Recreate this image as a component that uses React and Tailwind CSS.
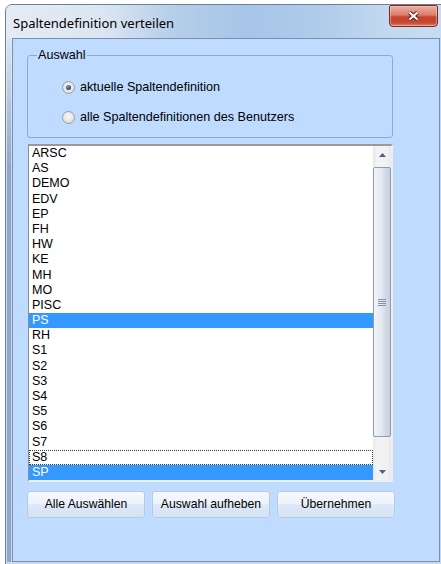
import { useState } from "react";

const codes = [
  "ARSC", "AS", "DEMO", "EDV", "EP", "FH", "HW", "KE", "MH", "MO", "PISC",
  "PS", "RH", "S1", "S2", "S3", "S4", "S5", "S6", "S7", "S8", "SP",
];

function Radio({ checked, label, onSelect }) {
  return (
    <label className="flex h-[15px] cursor-default items-center gap-[5px]" onClick={onSelect}>
      <span className="flex h-[13px] w-[13px] items-center justify-center rounded-full border border-[#9c9c9c] bg-[radial-gradient(circle_at_50%_40%,#fbfbfb_0%,#e6e6e6_55%,#cfcfcf_100%)]">
        {checked && (
          <span className="h-[5px] w-[5px] rounded-full bg-[radial-gradient(circle_at_40%_35%,#7fa2c8_0%,#2b4f78_60%,#15304f_100%)]" />
        )}
      </span>
      <span className="text-[12.6px] leading-[15px] text-black">{label}</span>
    </label>
  );
}

function ListRow({ code, selected, focused }) {
  let tone = "text-black";
  if (selected) tone = "bg-[#3399ff] text-white";
  return (
    <div
      className={
        "h-[15.2px] pl-[3px] text-[12.5px] leading-[15.2px] " +
        tone +
        (focused ? " outline-1 -outline-offset-1 outline-dotted outline-[#3a3a3a]" : "")
      }
    >
      {code}
    </div>
  );
}

function ScrollArrow({ up }) {
  return (
    <div className="flex h-[17px] items-center justify-center">
      <svg width="7" height="4" viewBox="0 0 7 4">
        <path d={up ? "M0 4 L3.5 0 L7 4 Z" : "M0 0 L7 0 L3.5 4 Z"} fill="#4d6185" />
      </svg>
    </div>
  );
}

function Button({ children }) {
  return (
    <button className="h-[27px] w-[118px] rounded-[3px] border border-[#b4c9e6] bg-[linear-gradient(to_bottom,#f6f9fd_0%,#edf3fb_46%,#dde8f7_52%,#d5e3f6_100%)] text-[12.2px] text-black shadow-[0_0_1px_#eef5ff]">
      {children}
    </button>
  );
}

export default function App() {
  const [mode, setMode] = useState("current");
  const selected = ["PS", "SP"];

  return (
    <div className="h-[564px] w-[441px] overflow-hidden bg-white font-['Liberation_Sans',Arial,sans-serif]">
      <div className="ml-[5px] mt-[4px] flex h-[600px] w-[443px] flex-col rounded-t-[7px] border border-[#6e8098] bg-[#c6d9ef]">
        {/* title bar */}
        <div className="flex h-[33px] items-start rounded-t-[6px] bg-[linear-gradient(to_right,#e4ebf4_0%,#dbe6f2_22%,#b5cee9_38%,#a7c5e7_55%,#aecbea_70%,#c2d8f0_86%,#c9dcf1_100%)]">
          <span className="ml-[7px] mt-[9px] font-['Noto_Sans',sans-serif] text-[13px] leading-[18px] text-black">
            Spaltendefinition verteilen
          </span>
          <button className="ml-auto mr-[9px] flex h-[22px] w-[49px] items-center justify-center rounded-b-[4px] rounded-t-[2px] border border-[#7b2c22] bg-[linear-gradient(to_bottom,#eab0a2_0%,#dc7d68_45%,#c7412d_55%,#c64a35_85%,#dd8a6c_100%)] shadow-[inset_0_0_0_1px_rgba(255,215,200,0.45)]">
            <svg width="13" height="10" viewBox="0 0 13 10">
              <path d="M2.5 1.5 L10.5 8.5 M10.5 1.5 L2.5 8.5" stroke="#4b1a14" strokeWidth="4" />
              <path d="M2.5 1.5 L10.5 8.5 M10.5 1.5 L2.5 8.5" stroke="#ffffff" strokeWidth="2.2" />
            </svg>
          </button>
        </div>

        <div className="flex">
          <div className="w-[6px] bg-[linear-gradient(to_bottom,rgba(228,237,248,0.9)_0px,rgba(228,237,248,0)_130px),linear-gradient(to_right,#cddef2_0px,#cddef2_1px,#8fa7c6_1px,#8fa7c6_5px,#c5d8ef_5px)]" />

          {/* client area */}
          <div className="h-[524px] w-[428px] border border-[#7a8fa9] bg-[#bfdbff] pl-[14px] pt-[9px]">
            <fieldset className="w-[366px] rounded-[3px] border border-[#8fa9ca]">
              <legend className="ml-[9px] px-[1px] text-[12.6px] leading-[15px] text-black">Auswahl</legend>
              <div className="flex flex-col gap-[15px] pb-[12px] pl-[34px] pt-[17px]">
                <Radio
                  checked={mode === "current"}
                  label="aktuelle Spaltendefinition"
                  onSelect={() => setMode("current")}
                />
                <Radio
                  checked={mode === "all"}
                  label="alle Spaltendefinitionen des Benutzers"
                  onSelect={() => setMode("all")}
                />
              </div>
            </fieldset>

            <div className="ml-[1px] mt-[6px] flex h-[338px] w-[365px] border-b-2 border-l border-r-2 border-t-2 border-b-[#eeeeee] border-l-[#8c8c8c] border-r-[#eeeeee] border-t-[#9a9a9a] bg-white">
              <div className="flex-1 overflow-hidden">
                {codes.map((code) => (
                  <ListRow
                    key={code}
                    code={code}
                    selected={selected.includes(code)}
                    focused={code === "S8"}
                  />
                ))}
              </div>
              <div className="flex w-[18px] flex-col bg-[linear-gradient(to_right,#e6e6e6_0%,#f3f3f3_20%,#f1f1f1_80%,#e8e8e8_100%)]">
                <ScrollArrow up />
                <div className="mt-[4px] flex h-[270px] items-center justify-center rounded-[2px] border border-[#8e9cb3] bg-[linear-gradient(to_right,#f2f4f8_0%,#e4e9f0_45%,#d3dbe7_70%,#c6d0de_100%)]">
                  <div className="flex flex-col gap-[1px]">
                    <div className="h-px w-[8px] bg-[#8593a8]" />
                    <div className="h-px w-[8px] bg-[#8593a8]" />
                    <div className="h-px w-[8px] bg-[#8593a8]" />
                    <div className="h-px w-[8px] bg-[#8593a8]" />
                  </div>
                </div>
                <div className="flex-1" />
                <ScrollArrow />
              </div>
            </div>

            <div className="mt-[9px] flex gap-[7px]">
              <Button>Alle Auswählen</Button>
              <Button>Auswahl aufheben</Button>
              <Button>Übernehmen</Button>
            </div>
          </div>

          <div className="w-[7px] bg-[#c6d9ef]" />
        </div>
      </div>
    </div>
  );
}
